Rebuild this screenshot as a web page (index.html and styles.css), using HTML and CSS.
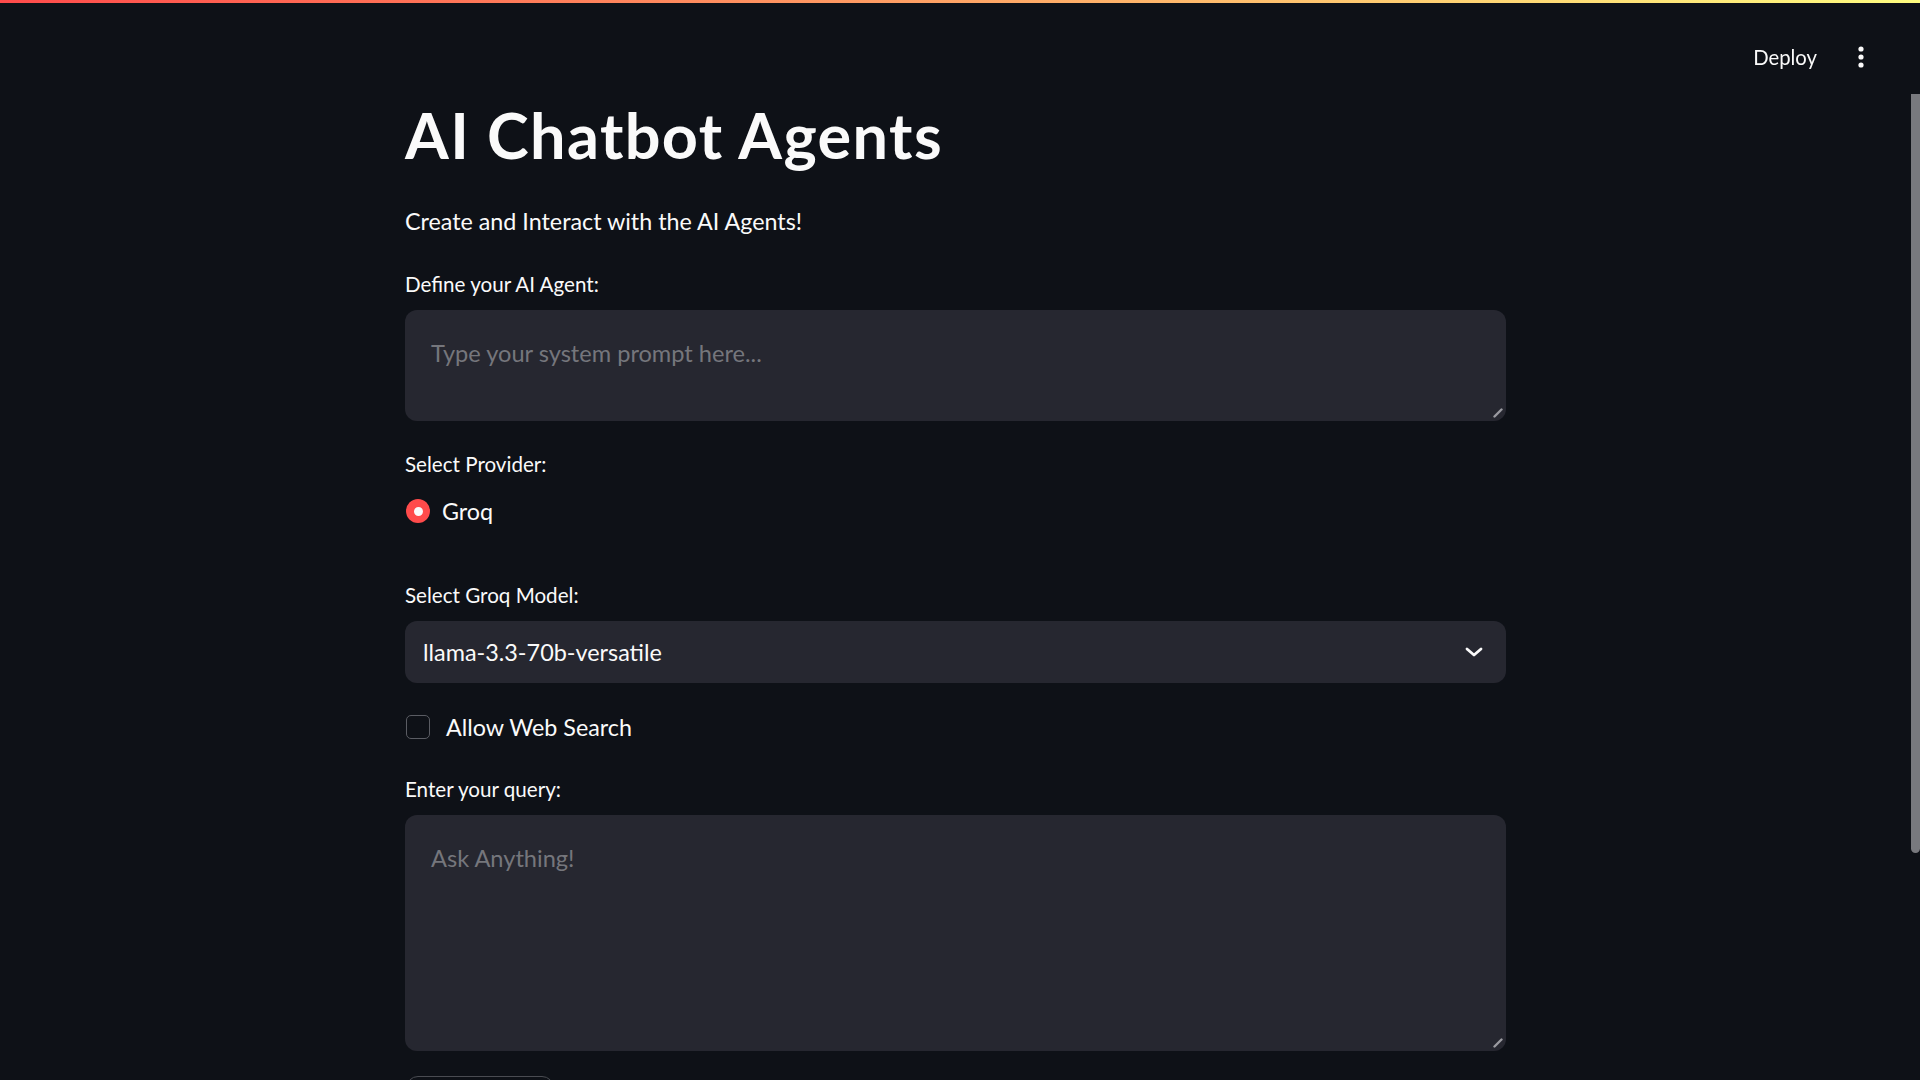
FILE: index.html
```html
<!DOCTYPE html>
<html lang="en">
<head>
<meta charset="utf-8">
<title>AI Chatbot Agents</title>
<link rel="stylesheet" href="styles.css">
</head>
<body>
<div class="decoration"></div>
<header class="header">
  <button class="deploy">Deploy</button>
  <button class="menu" aria-label="Main menu">
    <svg width="6" height="22" viewBox="0 0 6 22"><circle cx="3" cy="3" r="2.6" fill="#fafafa"/><circle cx="3" cy="11" r="2.6" fill="#fafafa"/><circle cx="3" cy="19" r="2.6" fill="#fafafa"/></svg>
  </button>
</header>
<div class="shell">
  <main class="main">
    <div class="block">
      <h1 class="title">AI Chatbot Agents</h1>
      <p class="subtitle">Create and Interact with the AI Agents!</p>

      <label class="label label-first">Define your AI Agent:</label>
      <div class="area-wrap area-small">
        <textarea class="area" placeholder="Type your system prompt here..."></textarea>
        <svg class="grip" width="10" height="10" viewBox="0 0 10 10"><line x1="1.5" y1="8.5" x2="8.5" y2="1.5" stroke="#9a9aa0" stroke-width="2.4" stroke-linecap="round"/></svg>
      </div>

      <label class="label label-provider">Select Provider:</label>
      <div class="option radio-row">
        <span class="radio"><span class="radio-dot"></span></span>
        <span class="option-text">Groq</span>
      </div>

      <label class="label label-model">Select Groq Model:</label>
      <div class="select">
        <span class="select-value">llama-3.3-70b-versatile</span>
        <svg class="chevron" width="18" height="10" viewBox="0 0 18 10"><polyline points="2,2 9,8 16,2" fill="none" stroke="#fafafa" stroke-width="2.8" stroke-linecap="round" stroke-linejoin="round"/></svg>
      </div>

      <div class="option check-row">
        <span class="checkbox"></span>
        <span class="option-text check-text">Allow Web Search</span>
      </div>

      <label class="label label-query">Enter your query:</label>
      <div class="area-wrap area-big">
        <textarea class="area" placeholder="Ask Anything!"></textarea>
        <svg class="grip" width="10" height="10" viewBox="0 0 10 10"><line x1="1.5" y1="8.5" x2="8.5" y2="1.5" stroke="#9a9aa0" stroke-width="2.4" stroke-linecap="round"/></svg>
      </div>

      <button class="ask">Ask Agent!</button>
    </div>
  </main>
  <aside class="scrollbar"><div class="thumb"></div></aside>
</div>
</body>
</html>
```
FILE: styles.css
```css
* { box-sizing: border-box; }
html, body {
  margin: 0;
  height: 100%;
  overflow: hidden;
  background: #0e1117;
}
body {
  font-family: "Lato", "Source Sans Pro", "Noto Sans", sans-serif;
  color: #fafafa;
  display: flex;
  flex-direction: column;
}
.decoration {
  height: 3px;
  flex: none;
  background: linear-gradient(90deg, #ff4b4b, #fffd80);
}
.header {
  position: fixed;
  top: 0;
  left: 0;
  right: 0;
  height: 114px;
  display: flex;
  align-items: center;
  justify-content: flex-end;
  padding-right: 56px;
  gap: 41px;
}
.deploy {
  background: none;
  border: none;
  color: #fafafa;
  font-family: inherit;
  font-size: 20.3px;
  padding: 0;
  line-height: 28px;
}
.menu {
  background: none;
  border: none;
  padding: 0;
  display: flex;
}
.shell {
  flex: 1;
  display: flex;
  min-height: 0;
}
.main {
  flex: 1;
  padding-top: 92px;
}
.block {
  width: 1101px;
  margin: 0 auto;
  display: flex;
  flex-direction: column;
  align-items: flex-start;
}
.title {
  margin: 0;
  font-size: 63px;
  line-height: 80px;
  font-weight: 700;
  letter-spacing: 1.4px;
}
.subtitle {
  margin: 30px 0 0;
  font-size: 23.3px;
  line-height: 32px;
}
.label {
  font-size: 20.6px;
  line-height: 28px;
}
.label-first { margin-top: 33px; }
.label-provider { margin-top: 29.5px; }
.label-model { margin-top: 53px; }
.label-query { margin-top: 31.5px; }
.area-wrap {
  position: relative;
  width: 100%;
  margin-top: 11.5px;
}
.area {
  display: block;
  width: 100%;
  border: none;
  outline: none;
  resize: none;
  border-radius: 12px;
  background: #262730;
  color: #fafafa;
  font-family: inherit;
  font-size: 23.6px;
  line-height: 32px;
  padding: 27px 20px 0 26px;
}
.area::placeholder { color: #75767c; }
.area-small .area { height: 111px; }
.area-big .area { height: 236px; }
.grip {
  position: absolute;
  right: 3px;
  bottom: 3px;
}
.option {
  display: flex;
  align-items: center;
  height: 34px;
}
.radio-row { margin-top: 16px; }
.radio {
  width: 24px;
  height: 24px;
  border-radius: 50%;
  background: #ff4b4b;
  display: flex;
  align-items: center;
  justify-content: center;
  margin-left: 1px;
}
.radio-dot {
  width: 9px;
  height: 9px;
  border-radius: 50%;
  background: #fafafa;
}
.option-text {
  font-size: 23.3px;
  line-height: 34px;
  margin-left: 12px;
}
.select {
  margin-top: 11.5px;
  width: 100%;
  height: 62px;
  border-radius: 12px;
  background: #262730;
  display: flex;
  align-items: center;
  justify-content: space-between;
  padding: 0 23px 0 18px;
}
.select-value {
  font-size: 23.4px;
  line-height: 32px;
}
.chevron { display: block; }
.check-row { margin-top: 27px; }
.checkbox {
  width: 24px;
  height: 24px;
  border: 1.5px solid #5a5c63;
  border-radius: 5px;
  margin-left: 1px;
}
.check-text { margin-left: 16px; }
.ask {
  margin-top: 25px;
  width: 148px;
  height: 60px;
  border: 1.5px solid #4a4c52;
  border-radius: 12px;
  background: #0e1117;
  color: #fafafa;
  font-family: inherit;
  font-size: 23px;
  margin-left: 1px;
}
.scrollbar {
  width: 9px;
  flex: none;
  padding-top: 91px;
}
.thumb {
  height: 759px;
  background: #78797e;
  border-radius: 0 0 5px 5px;
}
```
